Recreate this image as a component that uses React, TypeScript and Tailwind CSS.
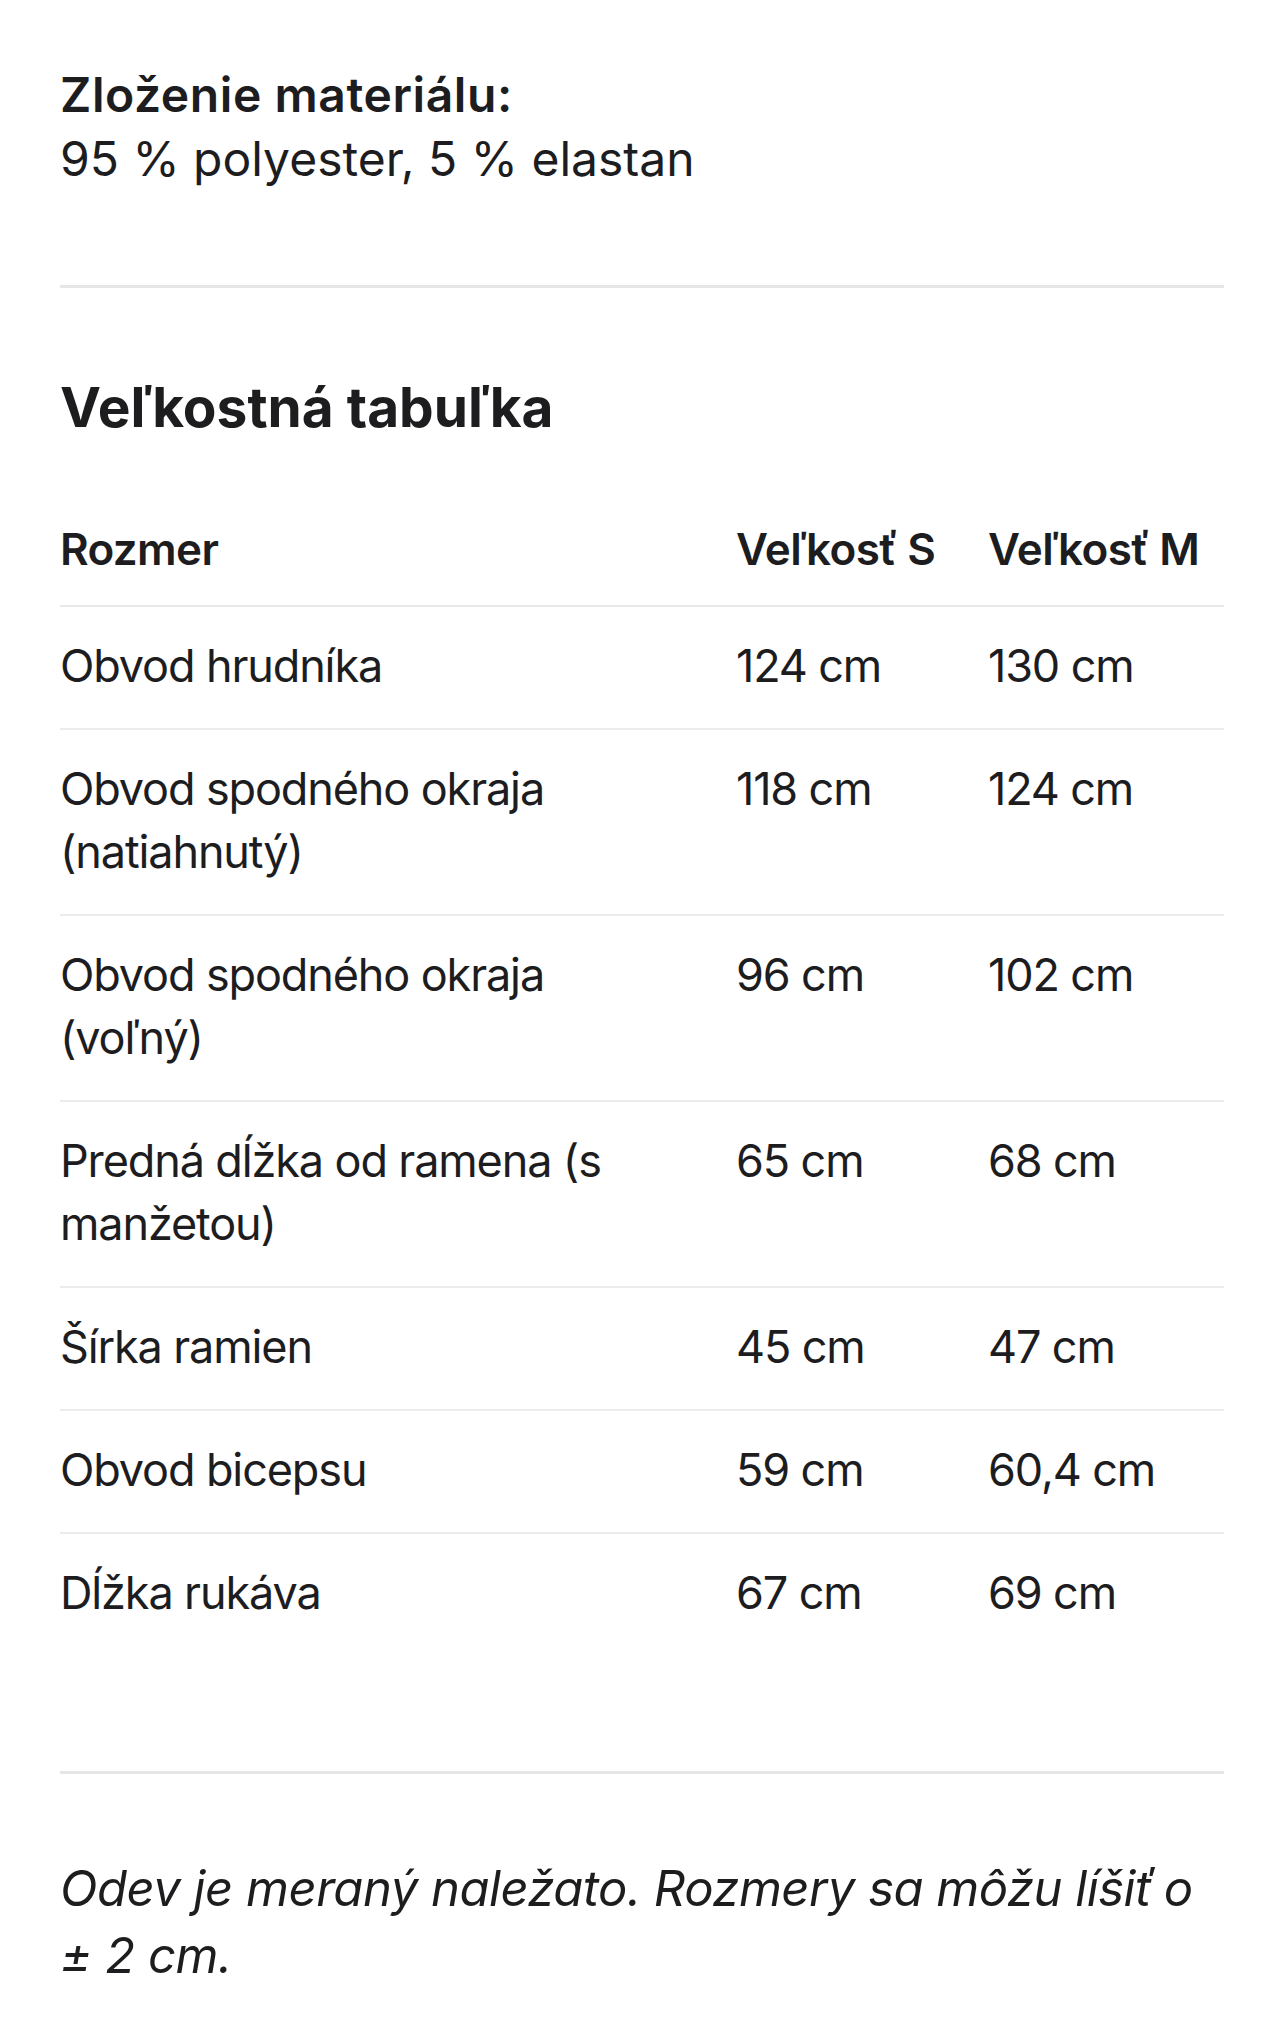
const rows: [string, string, string][] = [
  ["Obvod hrudníka", "124 cm", "130 cm"],
  ["Obvod spodného okraja (natiahnutý)", "118 cm", "124 cm"],
  ["Obvod spodného okraja (voľný)", "96 cm", "102 cm"],
  ["Predná dĺžka od ramena (s manžetou)", "65 cm", "68 cm"],
  ["Šírka ramien", "45 cm", "47 cm"],
  ["Obvod bicepsu", "59 cm", "60,4 cm"],
  ["Dĺžka rukáva", "67 cm", "69 cm"],
];

export default function App() {
  return (
    <div className="min-h-screen bg-white px-[60px] pt-[63px] pb-[40px] font-['Inter','Noto_Sans',sans-serif] text-[#1d1d1f]">
      {/* material */}
      <div className="text-[48px] leading-[64px]">
        <div className="font-semibold tracking-[0.012em]">Zloženie materiálu:</div>
        <div>95 % polyester, 5 % elastan</div>
      </div>

      <hr className="mt-[94px] border-0 h-[3px] bg-[#e6e6e6]" />

      {/* size chart */}
      <h2 className="mt-[86px] text-[55px] leading-[66px] font-bold">Veľkostná tabuľka</h2>

      <table className="mt-[79px] w-full table-fixed border-collapse">
        <colgroup>
          <col className="w-[676px]" />
          <col className="w-[252px]" />
          <col />
        </colgroup>
        <thead>
          <tr className="border-b-2 border-[#e8e8e8] text-left text-[44px] leading-[60px] font-semibold tracking-[-0.015em]">
            <th className="pb-[26px] font-semibold">Rozmer</th>
            <th className="pb-[26px] font-semibold">Veľkosť S</th>
            <th className="pb-[26px] font-semibold">Veľkosť M</th>
          </tr>
        </thead>
        <tbody className="text-[45px] leading-[63px] tracking-[-0.025em]">
          {rows.map((r, i) => (
            <tr
              key={i}
              className={i < rows.length - 1 ? "border-b-2 border-[#ececec] align-top" : "align-top"}
            >
              <td className="pt-[27px] pb-[31px] pr-[80px]">{r[0]}</td>
              <td className="pt-[27px] pb-[31px]">{r[1]}</td>
              <td className="pt-[27px] pb-[31px]">{r[2]}</td>
            </tr>
          ))}
        </tbody>
      </table>

      <hr className="mt-[116px] border-0 h-[3px] bg-[#e6e6e6]" />

      <p className="mt-[81px] text-[49px] leading-[67px] italic tracking-[-0.01em]">
        Odev je meraný naležato. Rozmery sa môžu líšiť o {"±\u00a02"} cm.
      </p>
    </div>
  );
}
